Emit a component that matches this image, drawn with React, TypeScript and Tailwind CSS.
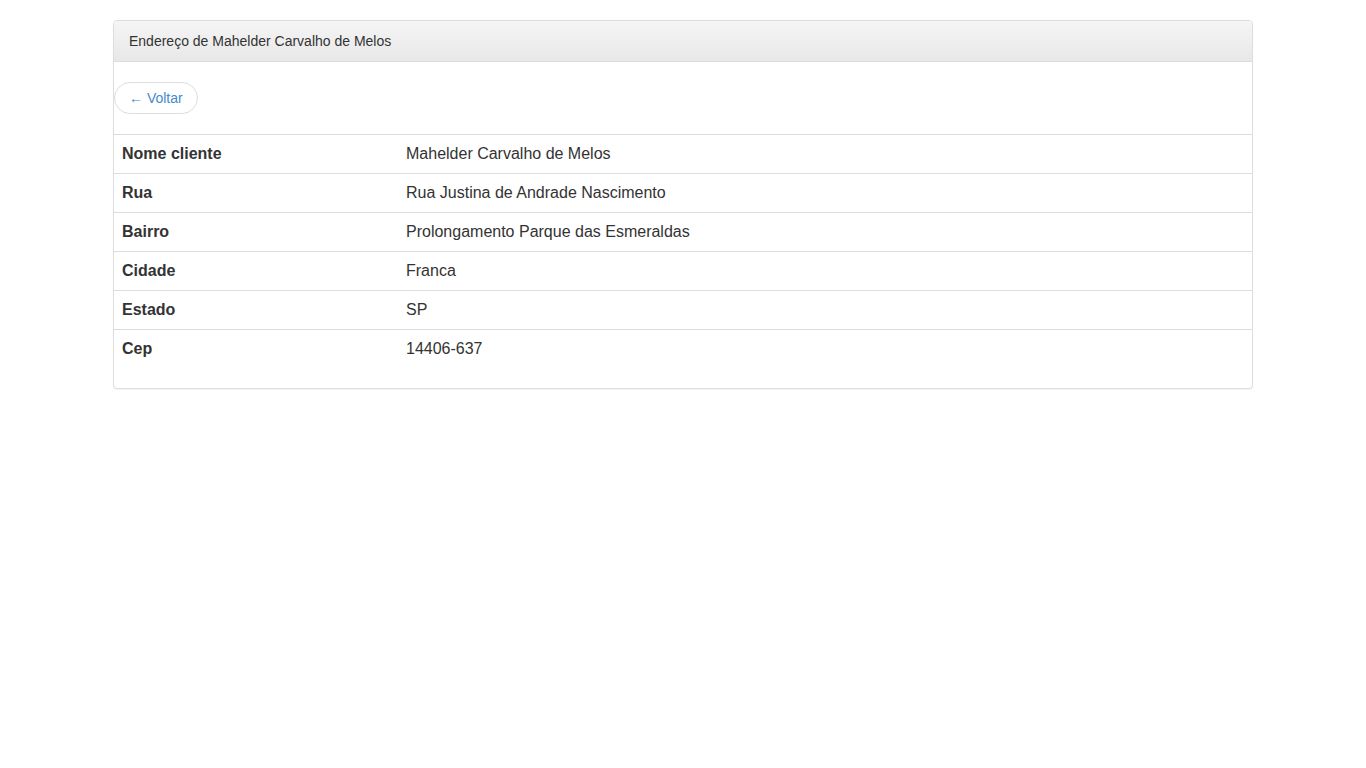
import React from "react";

const rows: [string, string][] = [
  ["Nome cliente", "Mahelder Carvalho de Melos"],
  ["Rua", "Rua Justina de Andrade Nascimento"],
  ["Bairro", "Prolongamento Parque das Esmeraldas"],
  ["Cidade", "Franca"],
  ["Estado", "SP"],
  ["Cep", "14406-637"],
];

export default function App() {
  return (
    <div
      className="min-h-[768px] bg-white text-[#333]"
      style={{ fontFamily: '"Liberation Sans", Arial, sans-serif' }}
    >
      <div className="w-[1140px] mx-auto pt-5">
        <div className="border border-[#ddd] rounded-[4px] shadow-[0_1px_1px_rgba(0,0,0,0.05)] bg-white">
          <div className="px-[15px] py-[10px] text-[14px] leading-[20px] border-b border-[#ddd] rounded-t-[3px] bg-gradient-to-b from-[#f5f5f5] to-[#e8e8e8]">
            Endereço de Mahelder Carvalho de Melos
          </div>
          <div className="pt-5 pb-5">
            <button className="h-[32px] px-[14px] rounded-full border border-[#ddd] bg-white text-[#428bca] text-[14px] leading-[20px]">
              ← Voltar
            </button>
          </div>
          <table className="w-full text-[16px] border-collapse mb-5">
            <tbody>
              {rows.map(([k, v]) => (
                <tr key={k} className="border-t border-[#ddd]">
                  <td className="w-[284px] px-2 py-2 leading-[22px] font-bold">{k}</td>
                  <td className="px-2 py-2 leading-[22px]">{v}</td>
                </tr>
              ))}
            </tbody>
          </table>
        </div>
      </div>
    </div>
  );
}
